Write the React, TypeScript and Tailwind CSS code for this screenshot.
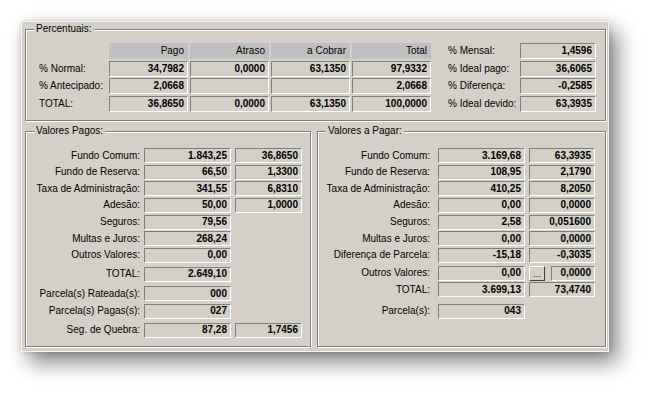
import type { ReactNode } from 'react';
import clsx from 'clsx';

const PANEL = 'bg-[#d4d0c8]';

function GroupBox({ title, className, children }: { title: string; className?: string; children: ReactNode }) {
  return (
    <div className={clsx('relative border border-[#808080] shadow-[1px_1px_0_#fff,inset_1px_1px_0_#fff]', className)}>
      <span className={clsx('absolute -top-[7px] left-[8px] px-[2px] text-[10px] leading-[12px]', PANEL)}>{title}</span>
      {children}
    </div>
  );
}

function Field({ value, className }: { value?: string; className?: string }) {
  return (
    <div
      className={clsx(
        'flex h-full shrink-0 items-center justify-end border border-t-[#808080] border-l-[#808080] border-b-white border-r-white pr-[3px] text-[10px] font-bold leading-none',
        className,
      )}
    >
      {value}
    </div>
  );
}

function Head({ children }: { children: ReactNode }) {
  return (
    <div className="flex h-full w-[79px] shrink-0 items-center justify-end bg-[#c0c0c0] pr-[4px] text-[10px] leading-none">
      {children}
    </div>
  );
}

function Label({ children, className }: { children: ReactNode; className?: string }) {
  return <div className={clsx('shrink-0 text-[10px] leading-none', className)}>{children}</div>;
}

// linha da tabela "Percentuais"
function PctRow({ label, cells, side, sideValue }: { label: string; cells: (string | undefined)[]; side: string; sideValue: string }) {
  return (
    <div className="flex h-[16px] items-center gap-[2px]">
      <Label className="w-[68px]">{label}</Label>
      {cells.map((c, i) => (
        <Field key={i} value={c} className="w-[79px]" />
      ))}
      <Label className="ml-[15px] w-[70px]">{side}</Label>
      <Field value={sideValue} className="w-[76px]" />
    </div>
  );
}

type Linha = { label: string; a?: string; b?: string; mt?: string };

const pagos: Linha[] = [
  { label: 'Fundo Comum:', a: '1.843,25', b: '36,8650' },
  { label: 'Fundo de Reserva:', a: '66,50', b: '1,3300' },
  { label: 'Taxa de Administração:', a: '341,55', b: '6,8310' },
  { label: 'Adesão:', a: '50,00', b: '1,0000' },
  { label: 'Seguros:', a: '79,56' },
  { label: 'Multas e Juros:', a: '268,24' },
  { label: 'Outros Valores:', a: '0,00' },
  { label: 'TOTAL:', a: '2.649,10', mt: 'mt-[2px]' },
  { label: 'Parcela(s) Rateada(s):', a: '000', mt: 'mt-[3px]' },
  { label: 'Parcela(s) Pagas(s):', a: '027', mt: 'mt-[1px]' },
  { label: 'Seg. de Quebra:', a: '87,28', b: '1,7456', mt: 'mt-[2px]' },
];

const aPagar: Linha[] = [
  { label: 'Fundo Comum:', a: '3.169,68', b: '63,3935' },
  { label: 'Fundo de Reserva:', a: '108,95', b: '2,1790' },
  { label: 'Taxa de Administração:', a: '410,25', b: '8,2050' },
  { label: 'Adesão:', a: '0,00', b: '0,0000' },
  { label: 'Seguros:', a: '2,58', b: '0,051600' },
  { label: 'Multas e Juros:', a: '0,00', b: '0,0000' },
  { label: 'Diferença de Parcela:', a: '-15,18', b: '-0,3035' },
];

function ValorRow({ l, cellGap, second }: { l: Linha; cellGap: string; second: ReactNode }) {
  return (
    <div className={clsx('flex h-[15px] items-center', l.mt)}>
      <Label className={clsx('w-[105px] text-right', cellGap)}>{l.label}</Label>
      <Field value={l.a} className="w-[87px]" />
      {second}
    </div>
  );
}

export default function App() {
  return (
    <div className="h-[396px] w-[652px] overflow-hidden bg-white pl-[21px] pt-[21px] font-['Liberation_Sans',Arial,sans-serif] text-black">
      <div
        className={clsx(
          'h-[331px] w-[588px] border border-[#f4f3f0] pl-[3px] pt-[7px] shadow-[8px_10px_20px_rgba(0,0,0,0.5),0_0_5px_rgba(0,0,0,0.15)]',
          PANEL,
        )}
      >
        <GroupBox title="Percentuais:" className="h-[92px] w-[581px] pl-[13px] pt-[13px]">
          <div className="flex flex-col gap-[1.5px]">
            <div className="flex h-[16px] items-center gap-[2px]">
              <div className="w-[68px] shrink-0" />
              <Head>Pago</Head>
              <Head>Atraso</Head>
              <Head>a Cobrar</Head>
              <Head>Total</Head>
              <Label className="ml-[15px] w-[70px]">% Mensal:</Label>
              <Field value="1,4596" className="w-[76px]" />
            </div>
            <PctRow label="% Normal:" cells={['34,7982', '0,0000', '63,1350', '97,9332']} side="% Ideal pago:" sideValue="36,6065" />
            <PctRow label="% Antecipado:" cells={['2,0668', undefined, undefined, '2,0668']} side="% Diferença:" sideValue="-0,2585" />
            <PctRow label="TOTAL:" cells={['36,8650', '0,0000', '63,1350', '100,0000']} side="% Ideal devido:" sideValue="63,3935" />
          </div>
        </GroupBox>

        <div className="mt-[10px] flex gap-[6px]">
          <GroupBox title="Valores Pagos:" className="h-[216px] w-[286px] pl-[9px] pt-[16px]">
            <div className="flex flex-col gap-[1.67px]">
              {pagos.map((l) => (
                <ValorRow
                  key={l.label}
                  l={l}
                  cellGap="mr-[4px]"
                  second={l.b ? <Field value={l.b} className="ml-[4px] w-[67px]" /> : null}
                />
              ))}
            </div>
          </GroupBox>

          <GroupBox title="Valores a Pagar:" className="h-[216px] w-[289px] pl-[7px] pt-[16px]">
            <div className="flex flex-col gap-[1.67px]">
              {aPagar.map((l) => (
                <ValorRow
                  key={l.label}
                  l={l}
                  cellGap="mr-[8px]"
                  second={<Field value={l.b} className="ml-[4px] w-[66px]" />}
                />
              ))}
              <ValorRow
                l={{ label: 'Outros Valores:', a: '0,00', mt: 'mt-[1px]' }}
                cellGap="mr-[8px]"
                second={
                  <>
                    <button className="ml-[4px] flex h-full w-[16px] shrink-0 items-end justify-center border border-t-white border-l-white border-b-[#404040] border-r-[#404040] pb-[1px] text-[9px] leading-none">
                      ...
                    </button>
                    <Field value="0,0000" className="ml-[6px] w-[44px]" />
                  </>
                }
              />
              <ValorRow
                l={{ label: 'TOTAL:', a: '3.699,13' }}
                cellGap="mr-[8px]"
                second={<Field value="73,4740" className="ml-[4px] w-[66px]" />}
              />
              <ValorRow l={{ label: 'Parcela(s):', a: '043', mt: 'mt-[5px]' }} cellGap="mr-[8px]" second={null} />
            </div>
          </GroupBox>
        </div>
      </div>
    </div>
  );
}
